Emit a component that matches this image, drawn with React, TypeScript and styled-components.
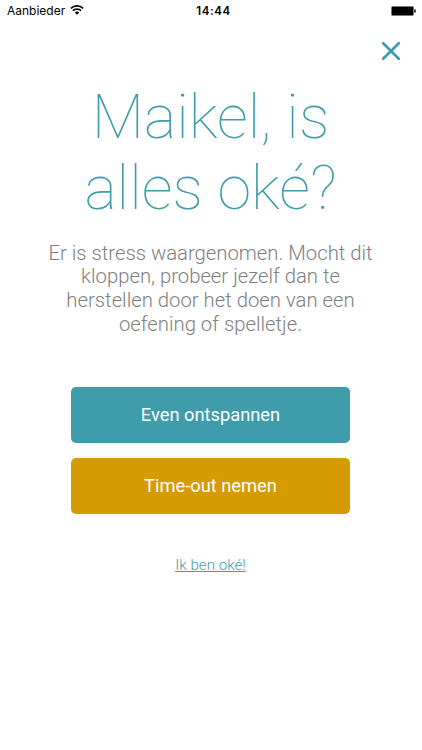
import React from 'react';
import styled, { createGlobalStyle } from 'styled-components';

const Global = createGlobalStyle`
  * { box-sizing: border-box; }
  body { margin: 0; background: #fff; }
`;

const Screen = styled.main`
  width: 422px;
  height: 750px;
  display: flex;
  flex-direction: column;
  overflow: hidden;
  background: #fff;
  font-family: Roboto, sans-serif;
`;

const StatusBar = styled.header`
  height: 22px;
  flex: none;
  padding: 0 6px 0 7px;
  display: grid;
  grid-template-columns: 1fr auto 1fr;
  align-items: center;
  font: 400 12px/22px Inter, sans-serif;
  color: #000;
`;

const Carrier = styled.div`
  display: flex;
  align-items: center;
  gap: 5px;
  svg { margin-top: -2px; }
`;

const Clock = styled.time`
  font-weight: 600;
  font-size: 11.5px;
  letter-spacing: 0.6px;
  margin-left: 4px;
`;

const Battery = styled.svg`
  justify-self: end;
`;

const CloseRow = styled.div`
  display: flex;
  justify-content: flex-end;
  padding: 19px 21px 0 0;
  height: 60px;
  flex: none;
`;

const CloseButton = styled.button`
  width: 20px;
  height: 20px;
  padding: 0;
  border: 0;
  background: none;
  display: flex;
`;

const Content = styled.section`
  display: flex;
  flex-direction: column;
  align-items: center;
  padding-right: 1px;
`;

const Title = styled.h1`
  margin: 0;
  font-size: 61px;
  line-height: 71px;
  font-weight: 100;
  text-align: center;
  color: #3e9cab;
`;

const Message = styled.p`
  margin: 17.6px 0 0;
  font-size: 20.3px;
  line-height: 23.8px;
  font-weight: 300;
  text-align: center;
  white-space: nowrap;
  color: #808080;
`;

const Actions = styled.div`
  margin-top: 50px;
  width: 279px;
  display: flex;
  flex-direction: column;
  gap: 15px;
`;

const ActionButton = styled.button<{ $color: string }>`
  height: 56px;
  border: 0;
  padding: 0 0 1px;
  border-radius: 5px;
  background: ${({ $color }) => $color};
  color: #fff;
  font: 400 18.3px Roboto, sans-serif;
`;

const Dismiss = styled.a`
  margin-top: 41px;
  font-size: 15.2px;
  line-height: 20px;
  font-weight: 300;
  color: #3e9cab;
  text-decoration: underline;
`;

export default function App() {
  return (
    <Screen>
      <Global />
      <StatusBar>
        <Carrier>
          <span>Aanbieder</span>
          <svg width="14" height="10" viewBox="0 0 14 10" fill="none" stroke="#000" strokeWidth="1.6">
            <path d="M.9 3.3a8.8 8.8 0 0 1 12.2 0M2.9 5.7a6 6 0 0 1 8.2 0" />
            <path d="M4.8 7.4a3.3 3.3 0 0 1 4.4 0L7 9.7Z" fill="#000" stroke="none" />
          </svg>
        </Carrier>
        <Clock>14:44</Clock>
        <Battery width="25" height="10" viewBox="0 0 25 10">
          <rect x=".5" y=".5" width="22" height="9" rx="1" fill="#000" stroke="#777" strokeWidth=".6" />
          <path d="M23.3 3.3h.6q.8 0 .8.8v1.8q0 .8-.8.8h-.6Z" />
        </Battery>
      </StatusBar>
      <CloseRow>
        <CloseButton aria-label="Sluiten">
          <svg width="20" height="20" viewBox="0 0 20 20" stroke="#3e9cab" strokeWidth="2.7" strokeLinecap="round">
            <path d="M2.2 2.2l15.6 15.6M17.8 2.2L2.2 17.8" />
          </svg>
        </CloseButton>
      </CloseRow>
      <Content>
        <Title>Maikel, is<br />alles oké?</Title>
        <Message>
          Er is stress waargenomen. Mocht dit<br />kloppen, probeer jezelf dan te<br />
          herstellen door het doen van een<br />oefening of spelletje.
        </Message>
        <Actions>
          <ActionButton $color="#3e9cab">Even ontspannen</ActionButton>
          <ActionButton $color="#d59b00">Time-out nemen</ActionButton>
        </Actions>
        <Dismiss>Ik ben oké!</Dismiss>
      </Content>
    </Screen>
  );
}
